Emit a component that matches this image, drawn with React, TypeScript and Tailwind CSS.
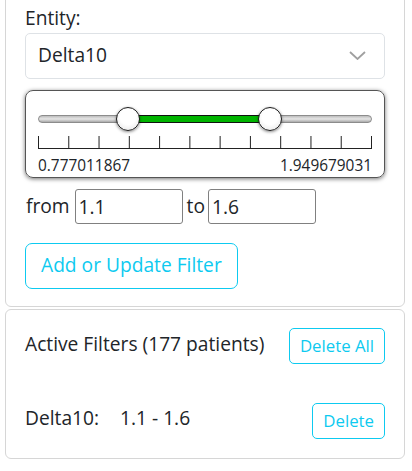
import { useState } from "react";

const MIN = 0.777011867;
const MAX = 1.949679031;

const Ticks = () => {
  const xs = Array.from({ length: 12 }, (_, i) => 0.5 + (i * 333) / 11);
  return (
    <svg width="334" height="13" viewBox="0 0 334 13" className="block">
      <line x1="0" y1="12.5" x2="334" y2="12.5" stroke="#222" strokeWidth="1" />
      {xs.map((x) => (
        <line key={x} x1={x} y1="0" x2={x} y2="13" stroke="#222" strokeWidth="1" />
      ))}
    </svg>
  );
};

const Handle = ({ left }: { left: string }) => (
  <div
    className={
      "absolute top-0 h-[24px] w-[24px] rounded-full border-[1.5px] border-[#1a1a1a] bg-[radial-gradient(circle_at_50%_40%,#ffffff_45%,#e2e2e2_100%)] shadow-[0_1px_3px_rgba(0,0,0,0.45)] " +
      left
    }
  />
);

const App = () => {
  const [from, setFrom] = useState("1.1");
  const [to, setTo] = useState("1.6");

  return (
    <div className="min-h-[471px] overflow-hidden bg-white font-['Open_Sans',sans-serif] text-[19.2px] leading-[1.5] text-[#212529]">
      {/* filter editor card */}
      <div className="-mt-[12px] ml-[5px] w-[400px] rounded-[6px] border border-[#d6d6d6] px-[19px] pb-[17px] pt-[15px]">
        <div>Entity:</div>
        <div className="flex h-[46px] items-center justify-between rounded-[5px] border border-[#dee2e6] pl-[12px] pr-[18px]">
          <span>Delta10</span>
          <svg width="17" height="9" viewBox="0 0 17 9">
            <polyline points="1,1 8.5,8 16,1" fill="none" stroke="#a0a0a0" strokeWidth="1.8" />
          </svg>
        </div>

        {/* range slider */}
        <div className="mt-[11px] h-[88px] rounded-[8px] border border-[#555] px-[12px] pt-[16px] shadow-[0_1px_4px_rgba(0,0,0,0.55)]">
          <div className="relative h-[24px]">
            <div className="absolute left-0 right-0 top-[8px] h-[8px] rounded-full border border-[#8c8c8c] bg-gradient-to-b from-[#bdbdbd] via-[#e6e6e6] to-[#a9a9a9]" />
            <div className="absolute left-[90px] top-[8px] h-[8px] w-[142px] border-y border-[#111] bg-[#00b400]" />
            <Handle left="left-[78px]" />
            <Handle left="left-[220px]" />
          </div>
          <div className="mt-[5px]">
            <Ticks />
          </div>
          <div className="mt-[8px] flex justify-between text-[15.4px] leading-[1.2]">
            <span>{MIN}</span>
            <span>{MAX}</span>
          </div>
        </div>

        <div className="mt-[11px] flex items-center">
          <span className="pl-[1px]">from</span>
          <input
            value={from}
            onChange={(e) => setFrom(e.target.value)}
            className="ml-[5px] h-[35px] w-[108px] rounded-[3px] border border-[#808080] px-[3px] text-[19.2px] outline-none"
          />
          <span className="ml-[4px]">to</span>
          <input
            value={to}
            onChange={(e) => setTo(e.target.value)}
            className="ml-[3px] h-[35px] w-[108px] rounded-[3px] border border-[#808080] px-[3px] text-[19.2px] outline-none"
          />
        </div>

        <button className="mt-[19px] h-[46px] rounded-[7px] border border-[#0dcaf0] px-[15px] text-[#0dcaf0]">
          Add or Update Filter
        </button>
      </div>

      {/* active filters card */}
      <div className="ml-[5px] mt-[2px] w-[400px] rounded-[6px] border border-[#d6d6d6] px-[19px] pb-[19px] pt-[18px]">
        <div className="flex items-start justify-between">
          <span className="mt-[2px]">Active Filters (177 patients)</span>
          <button className="h-[36px] rounded-[5px] border border-[#0dcaf0] px-[10px] text-[16.8px] text-[#0dcaf0]">
            Delete All
          </button>
        </div>
        <div className="mt-[39px] flex items-start justify-between">
          <div className="mt-[1px] flex">
            <span className="w-[95px]">Delta10:</span>
            <span>
              {from} - {to}
            </span>
          </div>
          <button className="h-[36px] rounded-[5px] border border-[#0dcaf0] px-[10px] text-[16.8px] text-[#0dcaf0]">
            Delete
          </button>
        </div>
      </div>
    </div>
  );
};

export default App;
